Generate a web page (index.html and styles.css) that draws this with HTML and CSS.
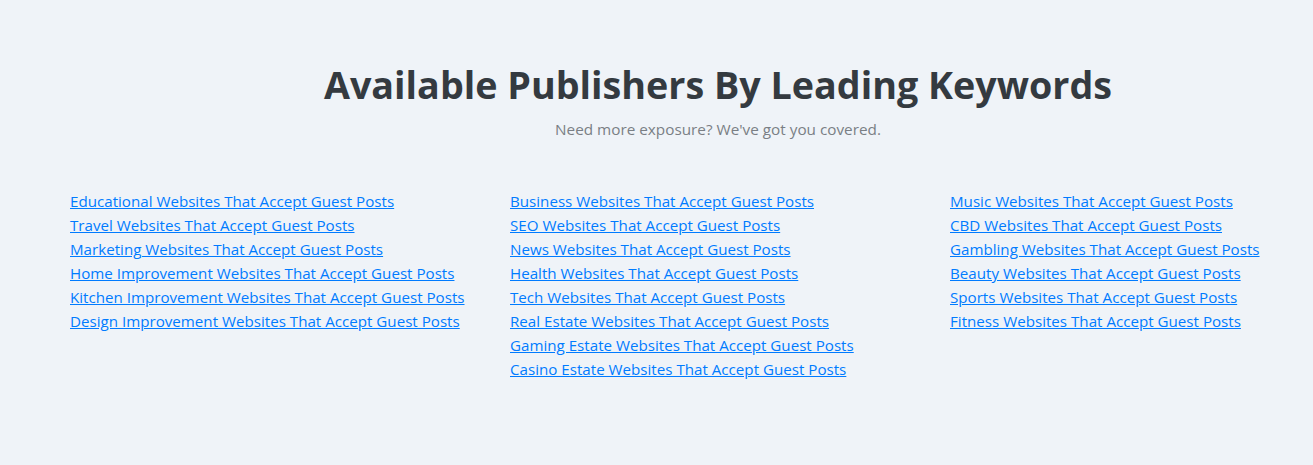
FILE: index.html
```html
<!DOCTYPE html>
<html lang="en">
<head>
  <meta charset="UTF-8" />
  <meta name="viewport" content="width=device-width, initial-scale=1.0" />
  <title>Available Publishers By Leading Keywords</title>
  <link rel="stylesheet" href="styles.css">
</head>
<body>
  <section class="keywords">
    <div class="keywords-head">
      <h2>Available Publishers By Leading Keywords</h2>
      <p class="sub">Need more exposure? We've got you covered.</p>
    </div>

    <div class="keywords-grid">
      <ul class="kw-list">
        <li><a href="#">Educational Websites That Accept Guest Posts</a></li>
        <li><a href="#">Travel Websites That Accept Guest Posts</a></li>
        <li><a href="#">Marketing Websites That Accept Guest Posts</a></li>
        <li><a href="#">Home Improvement Websites That Accept Guest Posts</a></li>
        <li><a href="#">Kitchen Improvement Websites That Accept Guest Posts</a></li>
        <li><a href="#">Design Improvement Websites That Accept Guest Posts</a></li>
      </ul>
      <ul class="kw-list">
        <li><a href="#">Business Websites That Accept Guest Posts</a></li>
        <li><a href="#">SEO Websites That Accept Guest Posts</a></li>
        <li><a href="#">News Websites That Accept Guest Posts</a></li>
        <li><a href="#">Health Websites That Accept Guest Posts</a></li>
        <li><a href="#">Tech Websites That Accept Guest Posts</a></li>
        <li><a href="#">Real Estate Websites That Accept Guest Posts</a></li>
        <li><a href="#">Gaming Estate Websites That Accept Guest Posts</a></li>
        <li><a href="#">Casino Estate Websites That Accept Guest Posts</a></li>
      </ul>
      <ul class="kw-list">
        <li><a href="#">Music Websites That Accept Guest Posts</a></li>
        <li><a href="#">CBD Websites That Accept Guest Posts</a></li>
        <li><a href="#">Gambling Websites That Accept Guest Posts</a></li>
        <li><a href="#">Beauty Websites That Accept Guest Posts</a></li>
        <li><a href="#">Sports Websites That Accept Guest Posts</a></li>
        <li><a href="#">Fitness Websites That Accept Guest Posts</a></li>
      </ul>
    </div>
  </section>
</body>
</html>
```

FILE: styles.css
```css
html, body {
  overflow: hidden;
}

body {
  margin: 0;
  font-family: 'Open Sans', 'Noto Sans', sans-serif;
  background: #eff3f8;
  color: #343a40;
}

.keywords {
  width: 1296px;
  padding: 58px 0 0 70px;
}

.keywords-head {
  text-align: center;
}

.keywords-head h2 {
  margin: 0;
  font-size: 37.7px;
  font-weight: 700;
  line-height: 54px;
  color: #343a40;
}

.sub {
  margin: 5px 0 0;
  font-size: 15.3px;
  line-height: 24px;
  color: #7a7f85;
}

.keywords-grid {
  display: grid;
  grid-template-columns: 440px 440px 416px;
  margin-top: 48px;
}

.kw-list {
  list-style: none;
  margin: 0;
  padding: 0;
}

.kw-list li {
  font-size: 15.15px;
  line-height: 24px;
}

.kw-list a {
  color: #007bff;
  text-decoration: underline;
}
```
